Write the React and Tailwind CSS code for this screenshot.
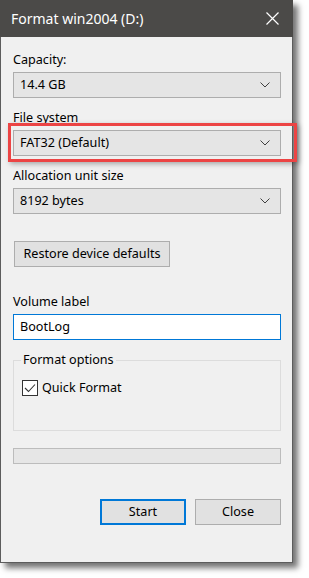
import React from 'react';

function Chevron() {
  return (
    <svg width="10" height="6" viewBox="0 0 10 6" className="shrink-0">
      <path d="M0.5 0.5 L5 5 L9.5 0.5" fill="none" stroke="#404040" strokeWidth="1" />
    </svg>
  );
}

function Combo({ value }) {
  return (
    <div className="flex h-[26px] w-[268px] items-center justify-between border border-[#adadad] bg-[#e5e5e5] pl-[6px] pr-[10px]">
      <span>{value}</span>
      <Chevron />
    </div>
  );
}

function Label({ children, className = '' }) {
  return <div className={'h-[18px] leading-[18px] mb-[3px] ' + className}>{children}</div>;
}

export default function App() {
  return (
    <div className="min-h-screen bg-white">
      <div
        className="w-[293px] h-[563px] flex flex-col bg-[#f0f0f0] border border-t-0 border-[#5c5c5c] shadow-[5px_5px_6px_rgba(0,0,0,0.55)] text-[12.6px] text-black whitespace-nowrap"
        style={{ fontFamily: '"Noto Sans", "Open Sans", sans-serif' }}
      >
        {/* title bar */}
        <div className="-mx-px h-[37px] bg-[#4b4a48] flex items-center justify-between pl-[11px] pr-[14px] text-white">
          <span className="text-[14px]">Format win2004 (D:)</span>
          <svg width="13" height="13" viewBox="0 0 13 13">
            <path d="M0.5 0.5 L12.5 12.5 M12.5 0.5 L0.5 12.5" stroke="#ffffff" strokeWidth="1.2" />
          </svg>
        </div>

        <div className="flex flex-col pl-[12px]">
          <Label className="mt-[14px]">Capacity:</Label>
          <Combo value="14.4 GB" />

          <Label className="mt-[11px]">File system</Label>
          <div className="relative">
            <Combo value="FAT32 (Default)" />
            <span className="absolute -left-[5px] -right-[5px] -top-[7px] -bottom-[6px] border-[3px] border-[#ec4444] shadow-[2px_2px_5px_rgba(0,0,0,0.3)]" />
          </div>

          <Label className="mt-[11px]">Allocation unit size</Label>
          <Combo value="8192 bytes" />

          <button className="mt-[27px] ml-px h-[26px] w-[156px] border border-[#adadad] bg-[#e1e1e1] text-center">
            Restore device defaults
          </button>

          <Label className="mt-[26px]">Volume label</Label>
          <div className="h-[26px] w-[268px] border border-[#0078d7] bg-white pl-[6px] leading-[24px]">BootLog</div>

          <div className="mt-[20px] h-[71px] w-[268px] border border-[#dcdcdc] flex flex-col">
            <span className="-mt-[10px] ml-[7px] self-start bg-[#f0f0f0] px-[2px] leading-[18px]">Format options</span>
            <div className="mt-[10px] ml-[8px] flex items-center gap-[4px]">
              <span className="h-[16px] w-[16px] border border-[#333333] bg-white flex items-center justify-center">
                <svg width="12" height="10" viewBox="0 0 12 10">
                  <path d="M1 5 L4.5 8.5 L11 1.5" fill="none" stroke="#333333" strokeWidth="1.1" />
                </svg>
              </span>
              <span className="leading-[18px]">Quick Format</span>
            </div>
          </div>

          <div className="mt-[17px] h-[16px] w-[268px] border border-[#bcbcbc] bg-[#e6e6e6]" />

          <div className="mt-[35px] w-[268px] flex justify-end gap-[9px]">
            <button className="h-[26px] w-[86px] border-2 border-[#0078d7] bg-[#e1e1e1]">Start</button>
            <button className="h-[26px] w-[86px] border border-[#adadad] bg-[#e1e1e1]">Close</button>
          </div>
        </div>
      </div>
    </div>
  );
}
